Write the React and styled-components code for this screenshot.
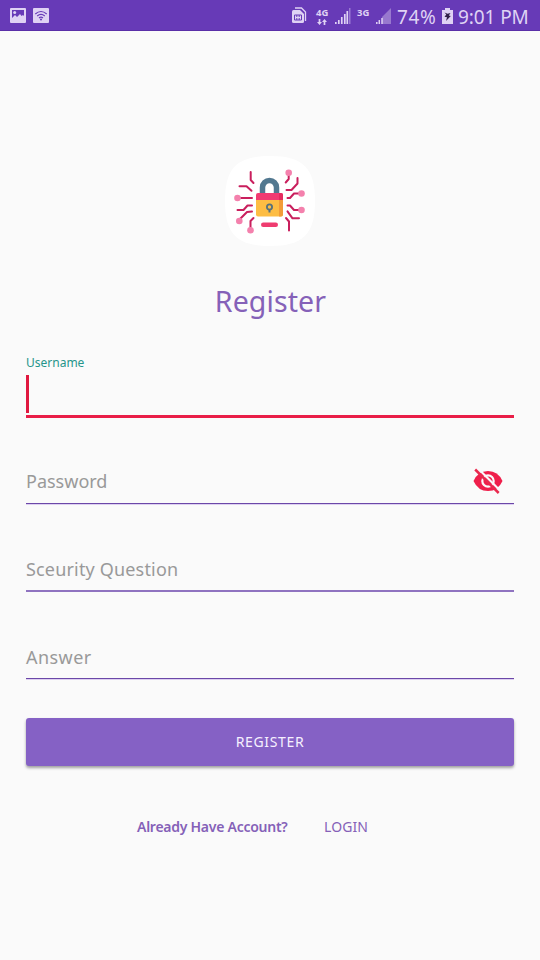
import React from 'react';
import styled, { createGlobalStyle } from 'styled-components';

const GlobalStyle = createGlobalStyle`
  *, *::before, *::after { box-sizing: border-box; }
  body { margin: 0; background: #fafafa; }
  input, button { font: inherit; border: 0; padding: 0; background: none; }
`;

const Screen = styled.div`
  width: 540px;
  height: 960px;
  display: flex;
  flex-direction: column;
  overflow: hidden;
  background: #fafafa;
  color: #8561b8;
  font-family: 'Noto Sans', 'Open Sans', sans-serif;
`;

const StatusBar = styled.header`
  height: 31px;
  flex: none;
  display: flex;
  justify-content: space-between;
  background: #673ab7;
  border-bottom: 1px solid #5a2fa8;
  color: #dfd2f4;
`;

const StatusGroup = styled.div`
  display: flex;
  align-items: flex-start;
  padding: ${(p) => p.$padding};
`;

const Icon = styled.svg`
  display: block;
  flex: none;
  margin: ${(p) => p.$margin || 0};
`;

const NetworkLabel = styled.span`
  width: 14px;
  margin: ${(p) => p.$margin};
  font-size: 9.5px;
  font-weight: 700;
  line-height: 10px;
`;

const NetworkBlock = styled.div`
  display: flex;
  flex-direction: column;
`;

const StatusText = styled.span`
  width: ${(p) => p.$width}px;
  margin-left: ${(p) => p.$gap}px;
  font-size: 19px;
  line-height: 34px;
  letter-spacing: ${(p) => p.$spacing || 0}px;
  white-space: nowrap;
`;

const Content = styled.main`
  display: flex;
  flex-direction: column;
  align-items: stretch;
  padding: 125px 26px 0;
`;

const Logo = styled.svg`
  display: block;
  align-self: center;
`;

const Title = styled.h1`
  margin: 32px 0 0 1px;
  height: 46px;
  text-align: center;
  font-size: 28.5px;
  font-weight: 400;
  line-height: 46px;
  letter-spacing: 0.1px;
`;

const Field = styled.label`
  height: ${(p) => p.$height}px;
  display: flex;
  flex-direction: column;
  justify-content: flex-end;
  border-bottom: ${(p) => p.$line || '1px solid #6b47a8'};
  box-shadow: ${(p) => (p.$line ? 'none' : '0 1px 0 #ddd0f0')};
`;

const FloatingLabel = styled.span`
  height: 18px;
  font-size: 12px;
  line-height: 18px;
  color: #26958a;
`;

const Caret = styled.span`
  width: 3px;
  height: 38px;
  margin: 3px 0 2px;
  background: #e0183f;
`;

const FieldRow = styled.span`
  height: 44px;
  display: flex;
  align-items: center;
  justify-content: space-between;
  padding: ${(p) => p.$top || 0}px 11px 0 0;
`;

const Hint = styled.span`
  font-size: 18px;
  line-height: 28px;
  letter-spacing: ${(p) => p.$spacing || 0}px;
  color: #999;
`;

const SubmitButton = styled.button`
  height: 48px;
  margin-top: 39px;
  border-radius: 3px;
  background: #8561c5;
  box-shadow: 0 2px 3px rgba(0, 0, 0, 0.36);
  color: #f6f0ff;
  font-size: 14px;
  line-height: 48px;
  letter-spacing: 0.65px;
`;

const Footer = styled.footer`
  display: flex;
  margin-top: 49px;
  padding-left: 111px;
  font-size: 14px;
  line-height: 24px;
`;

const Prompt = styled.span`
  width: 187px;
  font-weight: 600;
  letter-spacing: -0.26px;
`;

const LoginLink = styled.span`
  letter-spacing: 0.1px;
`;

function PictureIcon() {
  return (
    <Icon width="16" height="15" viewBox="0 0 16 15">
      <rect width="16" height="15" rx="1" fill="#dfd2f4" />
      <path d="M2 2h12v6l-1-1-1.5 1L10 6 7 9 5 7 2 10z" fill="#673ab7" />
      <circle cx="4.7" cy="4.5" r="1.5" fill="#dfd2f4" />
    </Icon>
  );
}

function WifiIcon() {
  return (
    <Icon width="16" height="15" viewBox="0 0 16 15" $margin="0 0 0 7px">
      <rect width="16" height="15" rx="1" fill="#dfd2f4" />
      <g fill="none" stroke="#673ab7" strokeWidth="1.2">
        <path d="M2.3 6q5.7-5 11.4 0" />
        <path d="M4.2 8q3.8-3.2 7.6 0" />
        <path d="M6 10q2-1.6 4 0" />
      </g>
      <circle cx="8" cy="11.5" r="1" fill="#673ab7" />
    </Icon>
  );
}

function SimIcon() {
  return (
    <Icon width="15" height="17" viewBox="0 0 15 17" $margin="7px 0 0">
      <path d="M3 1h6.5l4 4v9" fill="none" stroke="#dfd2f4" strokeWidth="1.3" />
      <path d="M1.5 3H8l4 4v7.5q0 1.5-1.5 1.5h-9Q0 16 0 14.5v-10Q0 3 1.5 3z" fill="#dfd2f4" />
      <path d="M2.5 8h7v5h-7zM4.8 8v2M7.2 8v2M4.8 13v-2M7.2 13v-2" fill="none" stroke="#673ab7" />
    </Icon>
  );
}

function DataArrows() {
  return (
    <Icon width="12" height="7" viewBox="0 0 12 7" $margin="1px 0 0 10px">
      <path d="M2.5 0v4M7.5 6V2" stroke="#dfd2f4" strokeWidth="1.7" />
      <path d="M0 3h5L2.5 6zM5 3h5L7.5 0z" fill="#dfd2f4" />
    </Icon>
  );
}

function SignalBars() {
  return (
    <Icon width="16" height="16" viewBox="0 0 16 16" $margin="8px 0 0 5px">
      <path d="M.8 16v-2M3.8 16v-4M6.8 16V9M9.8 16V6M12.3 16V3" stroke="#dfd2f4" strokeWidth="1.7" />
      <path d="M14.8 16V0" stroke="#a98bd9" strokeWidth="1.2" />
    </Icon>
  );
}

function WeakSignal() {
  return (
    <Icon width="15" height="16" viewBox="0 0 15 16" $margin="8px 0 0 5px">
      <path d="M6 16V9l9-9v16z" fill="#9878ce" />
      <path d="M.8 16v-2M3.3 16v-4M6 16v-6" stroke="#dfd2f4" strokeWidth="1.5" />
    </Icon>
  );
}

function BatteryIcon() {
  return (
    <Icon width="11" height="17" viewBox="0 0 11 17" $margin="8px 0 0">
      <path d="M3 0h5v2h3v14H0V2h3z" fill="#dfd2f4" />
      <path d="M2.5 4.5L5.5 5.8 8.5 5 6.8 7.6l2 .5L4 13l1-3.8-2.5-.5 1.8-2.2z" fill="#312047" />
    </Icon>
  );
}

function LockLogo() {
  return (
    <Logo width="90" height="90" viewBox="225 156 90 90">
      <path
        d="M270 156C303 156 315 168 315 201S303 246 270 246S225 234 225 201S237 156 270 156z"
        fill="#fff"
      />
      <g fill="none" stroke="#c91f5d" strokeWidth="2" strokeLinecap="round" strokeLinejoin="round">
        <path d="M250.7 172v8l2.8 3M239.5 186.3h7l5 4.5M241 198h11M237.5 210h6l4-4.5h4.5M239.5 219.5l7.5-7.5 5-.5M250.5 228v-7l3-3" />
        <path d="M288.7 174v5l-3 3.5M297.5 178v5.5l-6 6.5h-5M300 193.5h-6l-4 4.5h-2.5M300 210h-6l-4-4.5h-2.5M299 218.3h-6.5l-5-7M286 218l3 3.5v9" />
      </g>
      <g fill="#f481ad">
        <circle cx="288.7" cy="172.7" r="3.3" />
        <circle cx="301.5" cy="193.5" r="3.3" />
        <circle cx="301.5" cy="210" r="3.3" />
        <circle cx="237.5" cy="198" r="3.3" />
        <circle cx="239.3" cy="221" r="3.3" />
        <circle cx="250.5" cy="230.3" r="3.3" />
      </g>
      <path d="M262.5 194v-6.5a7 7 0 0 1 14 0v6.5" fill="none" stroke="#527890" strokeWidth="5.5" />
      <path d="M256 200v-5q0-2 2-2h23q2 0 2 2v5z" fill="#f13b72" />
      <path d="M256 200h27v14.5q0 2-2 2h-23q-2 0-2-2z" fill="#fdbd43" />
      <path d="M279 200h4v14.5q0 2-2 2h-2z" fill="#f29c38" />
      <path d="M279 193h2q2 0 2 2v5h-4z" fill="#e52b60" />
      <circle cx="269.5" cy="207" r="2.6" fill="none" stroke="#56717c" strokeWidth="1.8" />
      <path d="M269.5 209v3.5" stroke="#56717c" strokeWidth="2" />
      <rect x="261" y="222.5" width="17" height="4.5" rx="2.2" fill="#ef3c70" />
    </Logo>
  );
}

function EyeOffIcon() {
  return (
    <Icon width="30" height="26" viewBox="0 0 30 26">
      <path d="M.5 13Q5 3 15 3T29.5 13Q25 23 15 23T.5 13z" fill="#ef1f4b" />
      <circle cx="15" cy="13" r="5.7" fill="none" stroke="#fafafa" strokeWidth="2.2" />
      <path d="M4.5 0l24 24" stroke="#fafafa" strokeWidth="2.2" />
      <path d="M2.2 1.5l23.5 23.5" stroke="#e9294e" strokeWidth="2.5" />
    </Icon>
  );
}

export default function App() {
  return (
    <>
      <GlobalStyle />
      <Screen>
        <StatusBar>
          <StatusGroup $padding="8px 0 0 10px">
            <PictureIcon />
            <WifiIcon />
          </StatusGroup>
          <StatusGroup $padding="0 11px 0 0">
            <SimIcon />
            <NetworkBlock>
              <NetworkLabel $margin="8px 0 0 9px">4G</NetworkLabel>
              <DataArrows />
            </NetworkBlock>
            <SignalBars />
            <NetworkLabel $margin="8px 0 0 6px">3G</NetworkLabel>
            <WeakSignal />
            <StatusText $width={45} $gap={6} $spacing={0.6}>74%</StatusText>
            <BatteryIcon />
            <StatusText $width={71} $gap={5} $spacing={-0.1}>9:01 PM</StatusText>
          </StatusGroup>
        </StatusBar>
        <Content>
          <LockLogo />
          <Title>Register</Title>
          <Field $height={94} $line="3px solid #e91e47">
            <FloatingLabel>Username</FloatingLabel>
            <Caret />
          </Field>
          <Field $height={86}>
            <FieldRow>
              <Hint>Password</Hint>
              <EyeOffIcon />
            </FieldRow>
          </Field>
          <Field $height={88} $line="2px solid #8f73c0">
            <FieldRow $top={2}>
              <Hint $spacing={0.17}>Sceurity Question</Hint>
            </FieldRow>
          </Field>
          <Field $height={87}>
            <FieldRow $top={1}>
              <Hint $spacing={0.45}>Answer</Hint>
            </FieldRow>
          </Field>
          <SubmitButton type="button">REGISTER</SubmitButton>
          <Footer>
            <Prompt>Already Have Account?</Prompt>
            <LoginLink>LOGIN</LoginLink>
          </Footer>
        </Content>
      </Screen>
    </>
  );
}
